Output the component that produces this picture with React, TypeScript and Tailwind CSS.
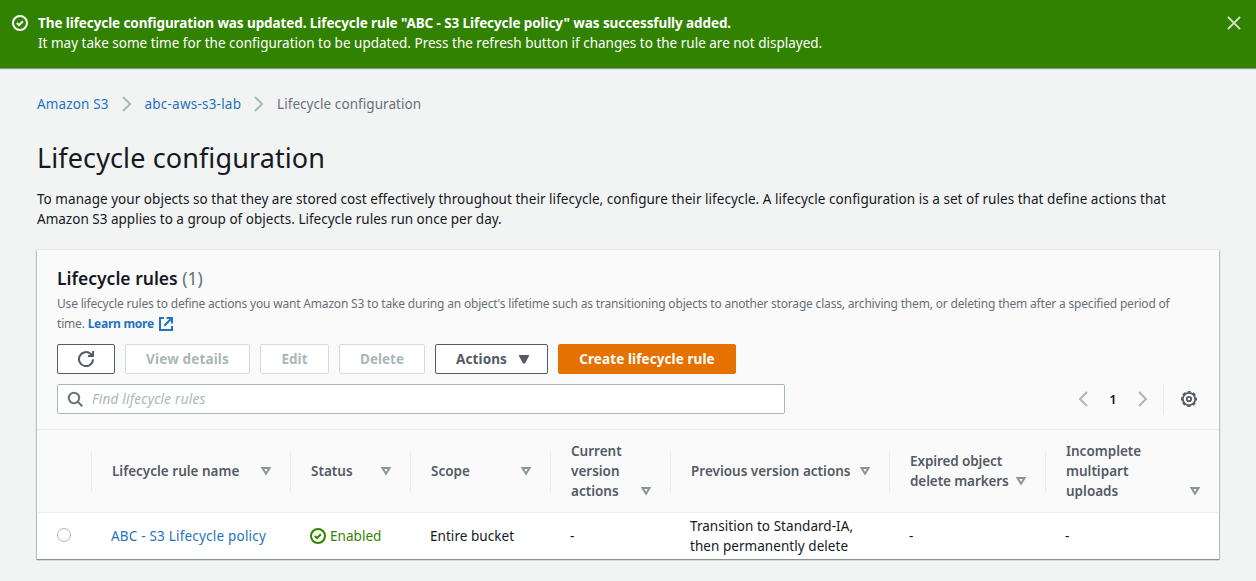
import React from "react";

type IconProps = { className?: string };

function StatusSuccess({ className = "" }: IconProps) {
  return (
    <svg viewBox="0 0 16 16" className={"size-4 shrink-0 fill-none stroke-current stroke-2 " + className}>
      <circle cx="8" cy="8" r="7" />
      <path d="M4.8 8 7 10.1l3.9-3.9" />
    </svg>
  );
}

function Close() {
  return (
    <svg viewBox="0 0 16 16" className="size-4 shrink-0 fill-none stroke-[#dbe6d5] stroke-[1.8]">
      <path d="m1.9 1.9 12.2 12.2M14.1 1.9 1.9 14.1" />
    </svg>
  );
}

function Chevron({ className = "" }: IconProps) {
  return (
    <svg viewBox="0 0 16 16" className={"size-4 shrink-0 fill-none stroke-[#aab7b8] stroke-2 " + className}>
      <path d="m4 1 7 7-7 7" />
    </svg>
  );
}

function External() {
  return (
    <svg viewBox="0 0 16 16" className="ml-[1px] inline-block size-4 fill-none stroke-[#1f73bf] stroke-2 align-[-4px]">
      <path d="M6 2H2v12h12v-4M8.5 2H14v5.5M14 2 6.3 9.7" />
    </svg>
  );
}

function Refresh() {
  return (
    <svg viewBox="0 0 16 16" className="size-4 fill-none stroke-[#545b64] stroke-2">
      <path d="M15 8.2a7 7 0 1 1-2.2-5.2L14.8 5" />
      <path d="M10 5h5V0" />
    </svg>
  );
}

function Search() {
  return (
    <svg viewBox="0 0 16 16" className="size-4 shrink-0 fill-none stroke-[#687078] stroke-2">
      <circle cx="7" cy="7" r="5.2" />
      <path d="m10.8 10.8 4.4 4.4" />
    </svg>
  );
}

function Gear() {
  return (
    <svg viewBox="0 0 16 16" className="size-4 fill-none stroke-[#545b64]">
      <circle cx="8" cy="8" r="2.2" strokeWidth="1.8" />
      <circle cx="8" cy="8" r="6.2" strokeWidth="1.8" />
      <circle cx="8" cy="8" r="7.3" strokeWidth="1.4" strokeDasharray="3.4 2.334" strokeDashoffset="1.7" />
    </svg>
  );
}

function SortCaret() {
  return (
    <svg viewBox="0 0 10 10" className="mb-[5px] h-[10px] w-[10px] shrink-0 fill-none stroke-[#879596] stroke-2">
      <path d="M1.5 2h7L5 7.7z" />
    </svg>
  );
}

const columns = [
  { lines: ["Lifecycle rule name"], box: "w-[199px]" },
  { lines: ["Status"], box: "w-[120px]" },
  { lines: ["Scope"], box: "w-[140px]" },
  { lines: ["Current", "version", "actions"], box: "w-[120px]" },
  { lines: ["Previous version actions"], box: "w-[219px]" },
  { lines: ["Expired object", "delete markers"], box: "w-[156px] tracking-[-0.1px]" },
  { lines: ["Incomplete", "multipart", "uploads"], box: "w-[173px]" },
];

const button = "flex h-[30px] items-center justify-center rounded-[2px] border text-[13.5px] font-bold whitespace-nowrap ";

export default function App() {
  return (
    <div className="min-h-[581px] w-full bg-[#f2f3f3] font-['Noto_Sans','Open_Sans',sans-serif] text-[13.5px] leading-5 text-[#16191f]">
      <header className="flex h-[68px] items-start bg-[#318200] pt-[13px] pr-[14px] pl-3 text-white shadow-[0_1px_1px_0_#879596]">
        <StatusSuccess className="mt-[2px]" />
        <div className="ml-[10px] flex-1 whitespace-nowrap">
          <p className="font-bold tracking-[-0.09px]">
            The lifecycle configuration was updated. Lifecycle rule "ABC - S3 Lifecycle policy" was successfully added.
          </p>
          <p>
            It may take some time for the configuration to be updated. Press the refresh button if changes to the rule are not displayed.
          </p>
        </div>
        <div className="mt-[2px]">
          <Close />
        </div>
      </header>

      <main className="px-[37px]">
        <nav className="mt-[26px] flex h-5 items-center whitespace-nowrap">
          <span className="w-[72px] tracking-[0.15px] text-[#1f73bf]">Amazon S3</span>
          <Chevron className="mr-[9.5px] ml-[10px]" />
          <span className="w-[96.5px] tracking-[0.22px] text-[#1f73bf]">abc-aws-s3-lab</span>
          <Chevron className="mx-[10px]" />
          <span className="tracking-[0.06px] text-[#687078]">Lifecycle configuration</span>
        </nav>

        <h1 className="mt-[26px] text-[27px] leading-9 tracking-[0.11px]">Lifecycle configuration</h1>
        <p className="mt-[13px] whitespace-nowrap tracking-[0.04px]">
          To manage your objects so that they are stored cost effectively throughout their lifecycle, configure their lifecycle. A lifecycle configuration is a set of rules that define actions that
          <br />
          <span className="tracking-[0.01px]">Amazon S3 applies to a group of objects. Lifecycle rules run once per day.</span>
        </p>

        <section className="mt-[21px] h-[309px] w-[1182px] bg-[#fafafa] shadow-[0_1px_1px_0_#879596,1px_1px_1px_0_rgba(0,28,36,0.15),-1px_1px_1px_0_rgba(0,28,36,0.15),0_0_0_1px_rgba(0,28,36,0.05)]">
          <div className="h-[179px] px-5 pt-[17px]">
            <h2 className="text-[17.5px] leading-[22px] font-semibold whitespace-nowrap">
              Lifecycle rules <span className="font-normal text-[#687078]">(1)</span>
            </h2>
            <p className="mt-[5px] text-[12px] leading-5 tracking-[-0.185px] whitespace-nowrap text-[#687078]">
              Use lifecycle rules to define actions you want Amazon S3 to take during an object's lifetime such as transitioning objects to another storage class, archiving them, or deleting them after a specified period of
              <br />
              time. <span className="font-bold tracking-[-0.27px] text-[#1f73bf]">Learn more <External /></span>
            </p>
            <div className="mt-[10px] flex gap-[10px]">
              <button className={button + "w-[58px] border-[#545b64] bg-white"}><Refresh /></button>
              <button className={button + "w-[125px] border-[#d5dbdb] bg-white tracking-[0.15px] text-[#aab7b8]"}>View details</button>
              <button className={button + "w-[69px] border-[#d5dbdb] bg-white text-[#aab7b8]"}>Edit</button>
              <button className={button + "w-[86px] border-[#d5dbdb] bg-white text-[#aab7b8]"}>Delete</button>
              <button className={button + "w-[113px] gap-[12px] border-[#545b64] bg-white pl-[2px] tracking-[0.1px] text-[#545b64]"}>
                <span>Actions</span>
                <svg viewBox="0 0 10 9" className="h-[9px] w-[10px] fill-[#545b64]"><path d="M0 0h10v1L6 8.4H4L0 1z" /></svg>
              </button>
              <button className={button + "w-[178px] border-[#e47100] bg-[#e47100] tracking-[0.1px] text-white"}>Create lifecycle rule</button>
            </div>
            <div className="mt-[10px] flex items-center">
              <div className="flex h-[30px] w-[728px] items-center gap-[9px] rounded-[2px] border border-[#aab7b8] bg-white pl-[9px] text-[#aab7b8]">
                <Search />
                <span className="tracking-[0.25px] italic">Find lifecycle rules</span>
              </div>
              <div className="ml-[290px] flex h-[30px] items-center">
                <Chevron className="rotate-180" />
                <span className="w-[44px] text-center text-[13px] font-semibold">1</span>
                <Chevron />
                <div className="ml-[12px] h-[30px] w-px bg-[#eaeded]" />
                <div className="ml-[17px]"><Gear /></div>
              </div>
            </div>
          </div>

          <div className="flex h-[84px] items-center border-y border-[#eaeded] text-[#545b64]">
            <div className="h-[41px] w-[55px] border-r border-[#eaeded]" />
            {columns.map((c, i) => (
              <div
                key={c.lines[0]}
                className={"flex h-[41px] items-center pr-[19px] pl-5 " + c.box + (i < 6 ? " border-r border-[#eaeded]" : "")}
              >
                <div className="flex flex-1 items-end justify-between">
                  <div className="font-semibold whitespace-nowrap">
                    {c.lines.map((l) => <div key={l}>{l}</div>)}
                  </div>
                  <SortCaret />
                </div>
              </div>
            ))}
          </div>

          <div className="flex h-[46px] items-center bg-white tracking-[0.05px] whitespace-nowrap">
            <div className="w-[54px] pb-[2px] pl-5"><div className="size-[14px] rounded-full border border-[#aab7b8] bg-white" /></div>
            <div className="w-[199px] pl-5 tracking-[0.2px] text-[#1f73bf]">ABC - S3 Lifecycle policy</div>
            <div className="flex w-[120px] items-center gap-1 pl-5 text-[#318200]"><StatusSuccess />Enabled</div>
            <div className="w-[140px] pl-5">Entire bucket</div>
            <div className="w-[120px] pl-5">-</div>
            <div className="w-[219px] pl-5">Transition to Standard-IA,<br />then permanently delete</div>
            <div className="w-[156px] pl-5">-</div>
            <div className="pl-5">-</div>
          </div>
        </section>
      </main>
    </div>
  );
}
